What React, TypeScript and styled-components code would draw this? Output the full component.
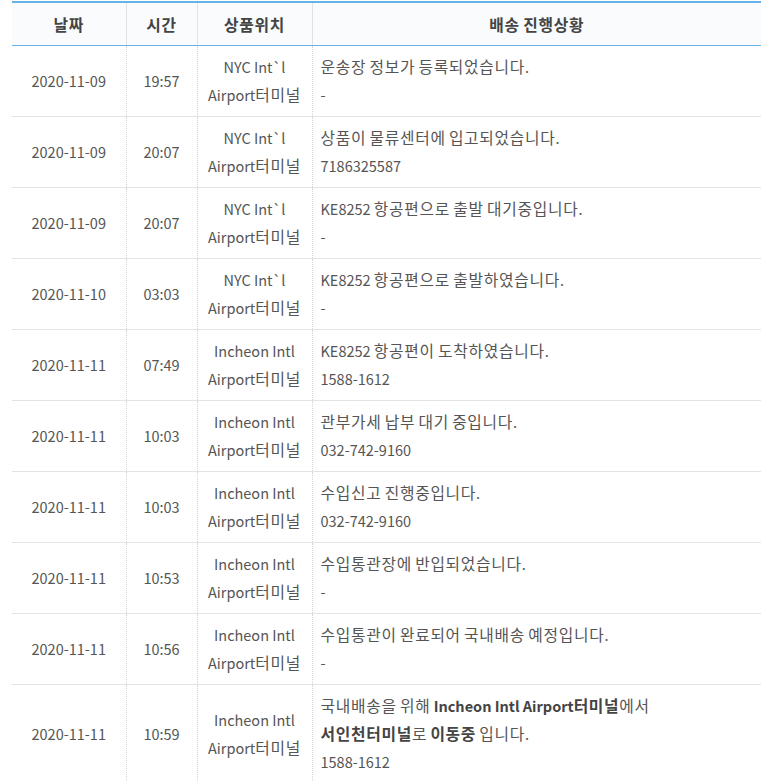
import React from "react";
import styled, { createGlobalStyle } from "styled-components";

const Global = createGlobalStyle`
  html, body { margin: 0; padding: 0; background: #fff; }
  body { font-family: "Noto Sans CJK KR", "Noto Sans", sans-serif; }
`;

const Wrap = styled.div`
  padding: 1px 4px 0 12px;
`;

const Table = styled.table`
  width: 749px;
  border-collapse: collapse;
  table-layout: fixed;
  border-top: 2px solid #68b3e6;
  font-size: 14.5px;
  color: #555;
`;

const Th = styled.th`
  height: 42px;
  padding: 0;
  background: #f9fbfd;
  color: #444;
  font-weight: 700;
  font-size: 15px;
  text-align: center;
  border-bottom: 1px solid #68b3e6;
  border-left: 1px solid #e2e2e2;
  &:first-child { border-left: none; }
`;

const Tr = styled.tr`
  border-bottom: 1px solid #e4e4e4;
`;

const Td = styled.td<{ $left?: boolean }>`
  padding: 7px ${(p) => (p.$left ? "8px" : "4px")};
  line-height: 28px;
  vertical-align: middle;
  text-align: ${(p) => (p.$left ? "left" : "center")};
  border-left: 1px dotted #d6d6d6;
  &:first-child { border-left: none; }
`;

const Line = styled.div`
  white-space: nowrap;
`;

const Hangul = styled.span`
  font-size: 15.8px;
  letter-spacing: 0.7px;
`;

const B = styled.b`
  font-weight: 700;
  color: #444;
`;

function K({ children }: { children: string }) {
  const parts = children.split(/([\uAC00-\uD7A3]+)/);
  return (
    <>
      {parts.map((p, i) =>
        /[\uAC00-\uD7A3]/.test(p) ? <Hangul key={i}>{p}</Hangul> : <React.Fragment key={i}>{p}</React.Fragment>
      )}
    </>
  );
}

type Row = {
  date: string;
  time: string;
  loc: string;
  msg: string;
  sub: string;
};

const NYC = "NYC Int`l";
const ICN = "Incheon Intl";

const rows: Row[] = [
  { date: "2020-11-09", time: "19:57", loc: NYC, msg: "운송장 정보가 등록되었습니다.", sub: "-" },
  { date: "2020-11-09", time: "20:07", loc: NYC, msg: "상품이 물류센터에 입고되었습니다.", sub: "7186325587" },
  { date: "2020-11-09", time: "20:07", loc: NYC, msg: "KE8252 항공편으로 출발 대기중입니다.", sub: "-" },
  { date: "2020-11-10", time: "03:03", loc: NYC, msg: "KE8252 항공편으로 출발하였습니다.", sub: "-" },
  { date: "2020-11-11", time: "07:49", loc: ICN, msg: "KE8252 항공편이 도착하였습니다.", sub: "1588-1612" },
  { date: "2020-11-11", time: "10:03", loc: ICN, msg: "관부가세 납부 대기 중입니다.", sub: "032-742-9160" },
  { date: "2020-11-11", time: "10:03", loc: ICN, msg: "수입신고 진행중입니다.", sub: "032-742-9160" },
  { date: "2020-11-11", time: "10:53", loc: ICN, msg: "수입통관장에 반입되었습니다.", sub: "-" },
  { date: "2020-11-11", time: "10:56", loc: ICN, msg: "수입통관이 완료되어 국내배송 예정입니다.", sub: "-" },
];

export default function App() {
  return (
    <>
      <Global />
      <Wrap>
        <Table>
          <colgroup>
            <col style={{ width: 114 }} />
            <col style={{ width: 71 }} />
            <col style={{ width: 115 }} />
            <col />
          </colgroup>
          <thead>
            <tr>
              <Th><K>날짜</K></Th>
              <Th><K>시간</K></Th>
              <Th><K>상품위치</K></Th>
              <Th><K>배송 진행상황</K></Th>
            </tr>
          </thead>
          <tbody>
            {rows.map((r, i) => (
              <Tr key={i}>
                <Td>{r.date}</Td>
                <Td>{r.time}</Td>
                <Td>
                  <Line>{r.loc}</Line>
                  <Line><K>Airport터미널</K></Line>
                </Td>
                <Td $left>
                  <Line><K>{r.msg}</K></Line>
                  <Line>{r.sub}</Line>
                </Td>
              </Tr>
            ))}
            <Tr>
              <Td>2020-11-11</Td>
              <Td>10:59</Td>
              <Td>
                <Line>Incheon Intl</Line>
                <Line><K>Airport터미널</K></Line>
              </Td>
              <Td $left>
                <Line>
                  <K>국내배송을 위해 </K>
                  <B><K>Incheon Intl Airport터미널</K></B>
                  <K>에서</K>
                </Line>
                <Line>
                  <B><K>서인천터미널</K></B>
                  <K>로 </K>
                  <B><K>이동중</K></B>
                  <K> 입니다.</K>
                </Line>
                <Line>1588-1612</Line>
              </Td>
            </Tr>
          </tbody>
        </Table>
      </Wrap>
    </>
  );
}
